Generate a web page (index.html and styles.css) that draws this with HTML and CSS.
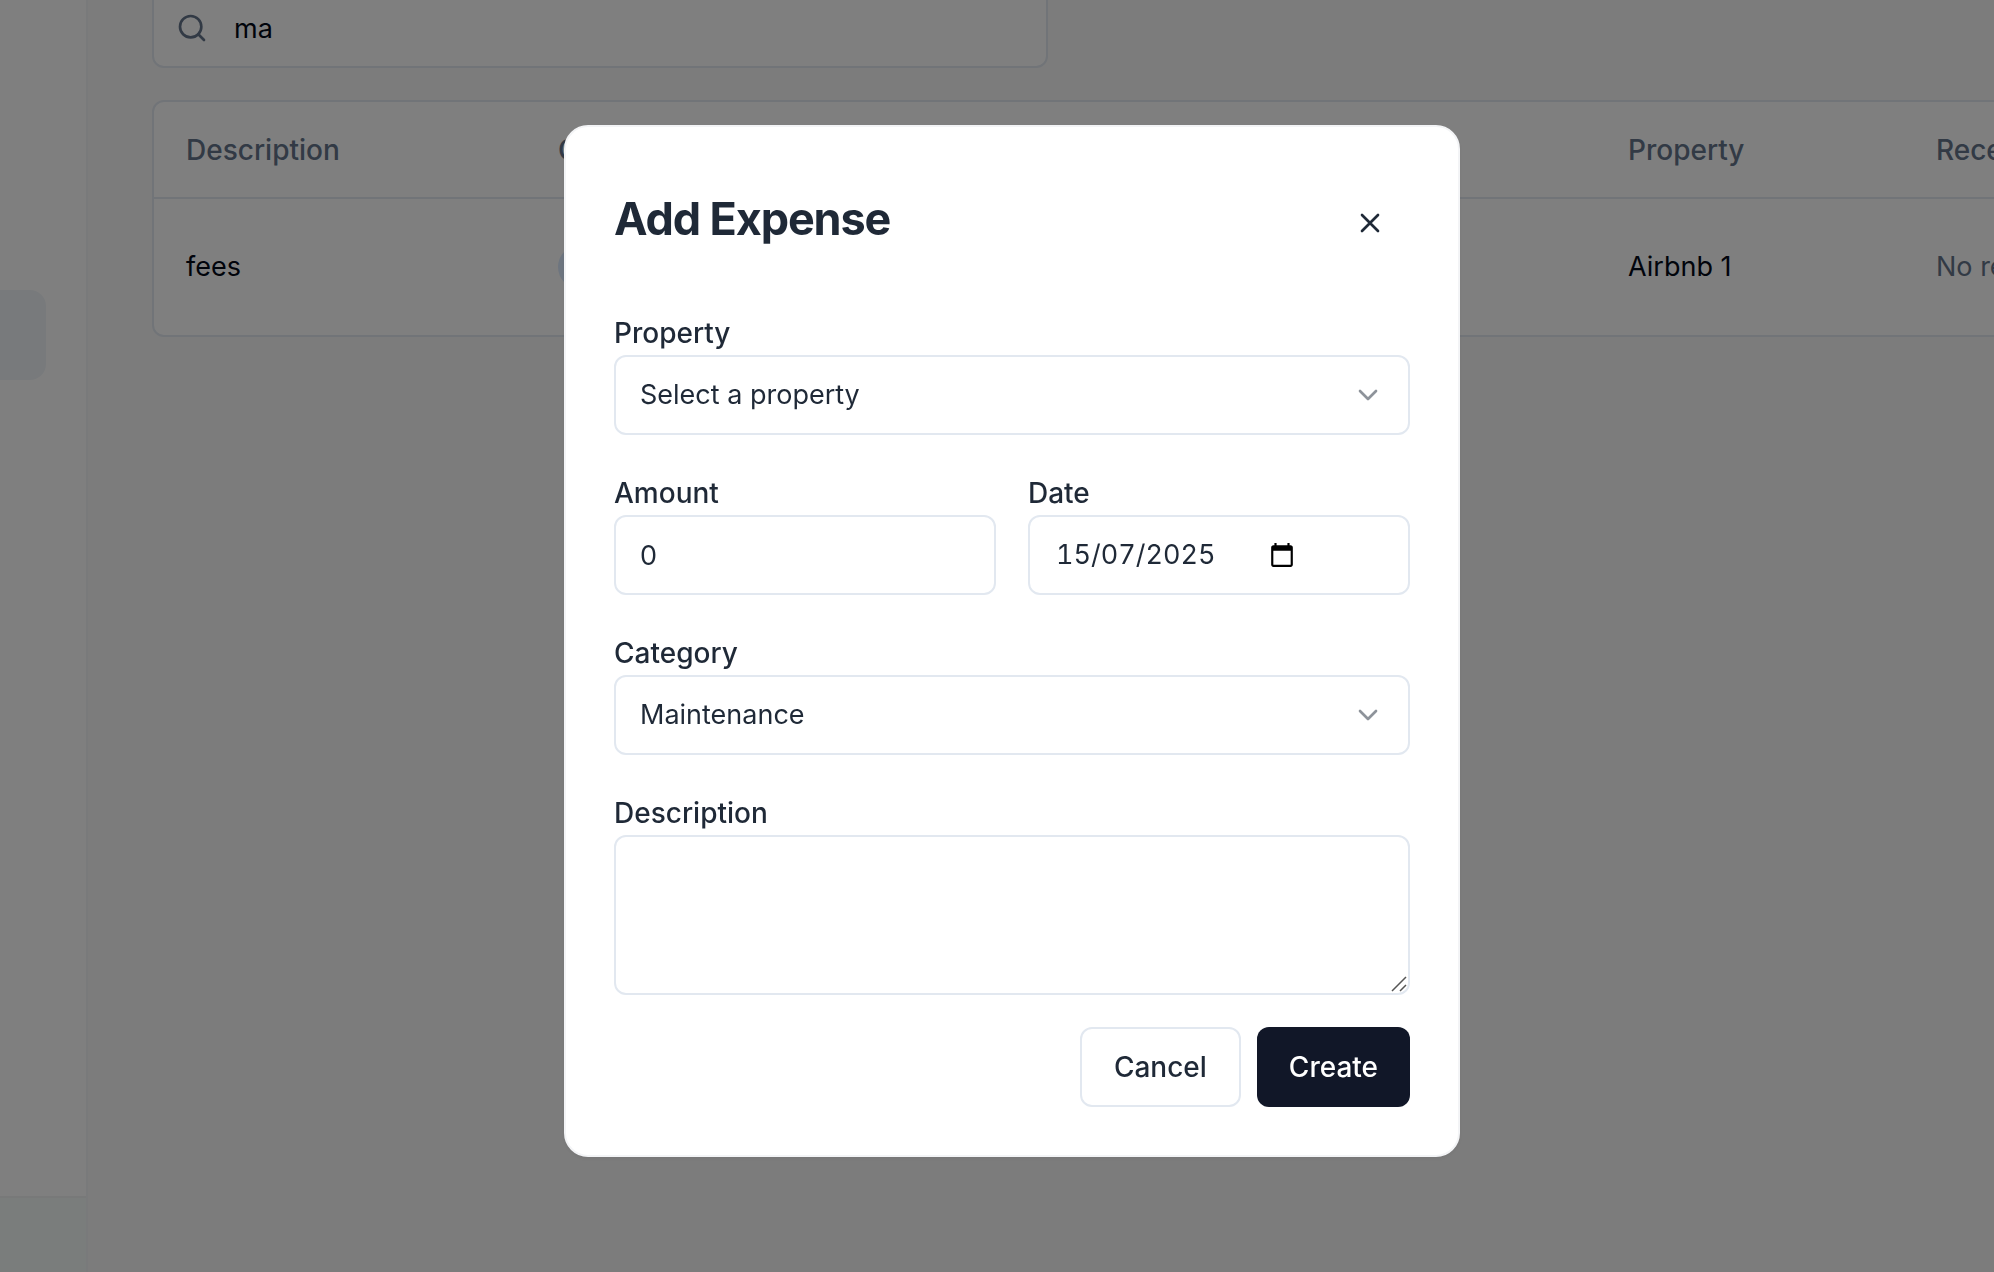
FILE: index.html
```html
<!DOCTYPE html>
<html lang="en-GB">
<head>
<meta charset="utf-8">
<meta name="viewport" content="width=device-width, initial-scale=1">
<title>Expenses</title>
<link rel="stylesheet" href="styles.css">
</head>
<body>
<div class="app">
  <aside class="sidebar">
    <nav class="sidebar-nav" aria-label="Main">
      <a class="nav-item" href="#expenses" aria-label="Expenses" aria-current="page"></a>
    </nav>
    <div class="sidebar-footer"></div>
  </aside>
  <main class="main">
    <div class="search">
      <svg class="icon search-icon" viewBox="0 0 24 24" aria-hidden="true"><circle cx="11" cy="11" r="8"/><path d="m21 21-4.3-4.3"/></svg>
      <input class="search-input" type="text" value="ma" aria-label="Search expenses">
    </div>
    <div class="table-card">
      <table class="table">
        <colgroup>
          <col class="col-description"><col class="col-category"><col class="col-amount"><col class="col-date"><col class="col-property"><col class="col-receipt">
        </colgroup>
        <thead>
          <tr><th>Description</th><th>Category</th><th>Amount</th><th>Date</th><th>Property</th><th>Receipt</th></tr>
        </thead>
        <tbody>
          <tr><td>fees</td><td><span class="badge">Maintenance</span></td><td></td><td></td><td>Airbnb 1</td><td class="muted">No receipt</td></tr>
        </tbody>
      </table>
    </div>
  </main>
</div>

<div class="overlay">
  <section class="dialog" role="dialog" aria-modal="true" aria-labelledby="dialog-title">
    <header class="dialog-header">
      <h2 class="dialog-title" id="dialog-title">Add Expense</h2>
      <button class="close" type="button" aria-label="Close">
        <svg class="icon" viewBox="0 0 24 24" aria-hidden="true"><path d="M18 6 6 18M6 6l12 12"/></svg>
      </button>
    </header>
    <form class="form" id="expense-form">
      <div class="field">
        <label class="label" for="property">Property</label>
        <div class="stack">
          <select class="control" id="property"><option>Select a property</option></select>
          <svg class="icon chevron" viewBox="0 0 24 24" aria-hidden="true"><path d="m6 9 6 6 6-6"/></svg>
        </div>
      </div>
      <div class="field-row">
        <div class="field">
          <label class="label" for="amount">Amount</label>
          <input class="control" id="amount" type="text" inputmode="decimal" value="0">
        </div>
        <div class="field">
          <label class="label" for="date">Date</label>
          <div class="control date">
            <input class="date-input" id="date" type="text" value="15/07/2025">
            <button class="date-button" type="button" aria-label="Open calendar">
              <svg class="calendar" viewBox="0 0 24 24" aria-hidden="true"><path d="M20 3h-1V1h-2v2H7V1H5v2H4c-1.1 0-2 .9-2 2v16c0 1.1.9 2 2 2h16c1.1 0 2-.9 2-2V5c0-1.1-.9-2-2-2zm0 18H4V8h16z"/></svg>
            </button>
          </div>
        </div>
      </div>
      <div class="field">
        <label class="label" for="category">Category</label>
        <div class="stack">
          <select class="control" id="category"><option>Maintenance</option></select>
          <svg class="icon chevron" viewBox="0 0 24 24" aria-hidden="true"><path d="m6 9 6 6 6-6"/></svg>
        </div>
      </div>
      <div class="field">
        <label class="label" for="description">Description</label>
        <div class="stack">
          <textarea class="control textarea" id="description"></textarea>
          <svg class="grip" viewBox="0 0 16 16" aria-hidden="true"><path d="M1 15 15 1M9 15l6-6"/></svg>
        </div>
      </div>
    </form>
    <footer class="actions">
      <button class="button button-outline" type="button">Cancel</button>
      <button class="button button-primary" type="submit" form="expense-form">Create</button>
    </footer>
  </section>
</div>
</body>
</html>
```

FILE: styles.css
```css
* {
  box-sizing: border-box;
}

body {
  margin: 0;
  overflow: hidden;
  background: #f8f8f8;
  color: #020817;
  font: 400 27px/40px Inter, "Liberation Sans", sans-serif;
}

input,
select,
textarea,
button {
  margin: 0;
  font: inherit;
  color: inherit;
}

.icon {
  width: 32px;
  height: 32px;
  fill: none;
  stroke: currentColor;
  stroke-width: 2;
  stroke-linecap: round;
  stroke-linejoin: round;
}

/* Page behind the dialog */
.app {
  display: grid;
  grid-template-columns: 88px minmax(0, 1fr);
  min-height: 100vh;
}

.sidebar {
  display: flex;
  flex-direction: column;
  background: #fff;
  border-right: 2px solid #f3f4f6;
}

.sidebar-nav {
  flex: 1;
  padding: 290px 40px 0 0;
}

.nav-item {
  display: block;
  height: 90px;
  border-radius: 0 16px 16px 0;
  background: #f1f5f9;
}

.sidebar-footer {
  height: 76px;
  border-top: 2px solid #f1f2f2;
  background: #f5faf8;
}

.main {
  display: flex;
  flex-direction: column;
  gap: 32px;
  margin-top: -12px;
  padding-left: 64px;
  overflow: hidden;
}

.search {
  display: flex;
  align-items: center;
  gap: 26px;
  height: 80px;
  max-width: 896px;
  padding: 0 22px;
  border: 2px solid #e2e8f0;
  border-radius: 12px;
  background: #fff;
}

.search-icon {
  color: #64748b;
}

.search-input {
  flex: 1;
  min-width: 0;
  padding: 2px 0 0;
  border: 0;
  background: none;
  outline: none;
}

.table-card {
  width: 2100px;
  border: 2px solid #e2e8f0;
  border-radius: 12px;
  background: #fff;
}

.table {
  width: 100%;
  table-layout: fixed;
  border-collapse: separate;
  border-spacing: 0;
  text-align: left;
}

.col-description { width: 372px; }
.col-category { width: 392px; }
.col-amount { width: 320px; }
.col-date { width: 358px; }
.col-property { width: 308px; }

.table th {
  height: 97px;
  padding: 0 32px;
  border-bottom: 2px solid #e2e8f0;
  color: #64748b;
  font-size: 28px;
  font-weight: 500;
}

.table td {
  height: 136px;
  padding: 0 32px;
}

.table .muted {
  color: #64748b;
}

.badge {
  display: inline-block;
  padding: 2px 20px;
  border-radius: 22px;
  background: #dbeafe;
  color: #1e40af;
}

/* Dialog */
.overlay {
  position: fixed;
  inset: 0;
  display: grid;
  place-items: center;
  padding: 10px 0 0 30px;
  background: rgb(0 0 0 / 50%);
}

.dialog {
  width: 100%;
  max-width: 896px;
  padding: 48px;
  border: 2px solid #f3f4f6;
  border-radius: 24px;
  background: #fff;
  color: #1f2937;
  box-shadow: 0 2px 4px rgb(0 0 0 / 5%);
}

.dialog-header {
  display: flex;
  align-items: flex-start;
  justify-content: space-between;
  margin-bottom: 40px;
}

.dialog-title {
  margin: 0;
  font-size: 45px;
  font-weight: 700;
  line-height: 88px;
  letter-spacing: -0.025em;
}

.close {
  display: grid;
  place-items: center;
  width: 80px;
  height: 96px;
  padding: 0;
  border: 0;
  background: none;
}

.form {
  display: flex;
  flex-direction: column;
  gap: 36px;
}

.field {
  display: flex;
  flex-direction: column;
}

.field-row {
  display: grid;
  grid-template-columns: 1fr 1fr;
  gap: 32px;
}

.label {
  font-size: 28px;
  font-weight: 500;
  line-height: 44px;
}

.control {
  width: 100%;
  height: 80px;
  padding: 0 24px;
  border: 2px solid #e2e8f0;
  border-radius: 12px;
  background: #fff;
  appearance: none;
  outline: none;
}

.stack {
  display: grid;
  align-items: center;
}

.stack > * {
  grid-area: 1 / 1;
}

.chevron {
  justify-self: end;
  margin-right: 26px;
  opacity: 0.5;
  pointer-events: none;
}

.date {
  display: flex;
  align-items: center;
  gap: 24px;
}

.date-input {
  width: 191px;
  padding: 0 2px;
  border: 0;
  background: none;
  font-variant-numeric: tabular-nums;
  outline: none;
}

.date-button {
  display: grid;
  padding: 0;
  border: 0;
  background: none;
}

.calendar {
  width: 26px;
  height: 26px;
  fill: #000;
}

.textarea {
  display: block;
  height: 160px;
  padding: 16px 24px;
  resize: none;
}

.grip {
  place-self: end;
  width: 16px;
  height: 16px;
  margin: 0 3px 3px 0;
  fill: none;
  stroke: #555;
  stroke-width: 1.5;
  pointer-events: none;
}

.actions {
  display: flex;
  justify-content: flex-end;
  gap: 16px;
  margin-top: 32px;
}

.button {
  height: 80px;
  padding: 0 32px;
  border: 0;
  border-radius: 12px;
  font-size: 28px;
  font-weight: 500;
}

.button-outline {
  border: 2px solid #e2e8f0;
  background: #fff;
}

.button-primary {
  background: #111728;
  color: #fff;
}
```
